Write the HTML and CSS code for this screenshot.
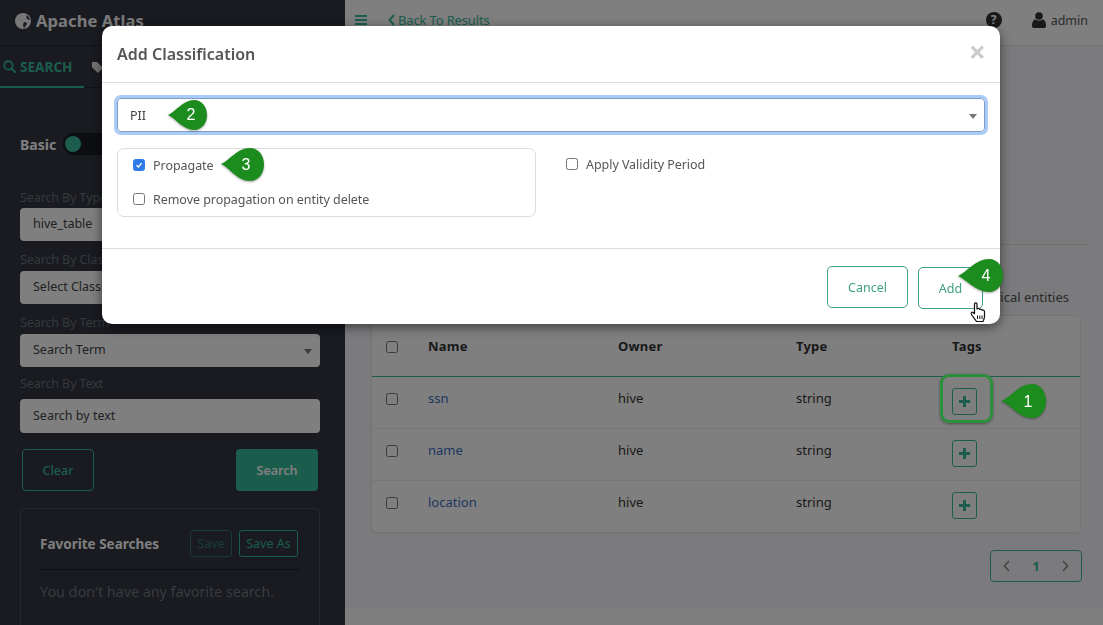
FILE: index.html
```html
<!DOCTYPE html>
<html lang="en">
<head>
<meta charset="utf-8">
<title>Apache Atlas</title>
<link rel="stylesheet" href="styles.css">
</head>
<body>
<div class="app">
  <aside class="sidebar">
    <div class="brand">
      <svg class="globe" viewBox="0 0 16 16"><circle cx="8" cy="8" r="8" fill="#f0f0f0"/><path d="M9 9 11.500 9.500 12 11 10.500 13 9.500 15 8.500 14.500 8 11.500ZM11.500 2 14 4.500 15 7 13 6.500 11.500 5Z" fill="#323641"/></svg>
      <span>Apache Atlas</span>
    </div>
    <nav class="tabs">
      <a class="tab active">
        <svg class="tab-icon" viewBox="0 0 14 14"><circle cx="5.800" cy="5.800" r="4.500" fill="none" stroke="currentColor" stroke-width="2"/><path d="M9 9l4 4" stroke="currentColor" stroke-width="2.200" stroke-linecap="round"/></svg>
        SEARCH
      </a>
      <a class="tab">
        <svg class="tab-icon tag" viewBox="0 0 14 14"><path d="M1 1h5.500L13 7.500 7.500 13 1 6.500Z" fill="currentColor"/></svg>
      </a>
    </nav>
    <div class="search-form">
      <div class="mode">
        <b>Basic</b>
        <span class="toggle"><i></i></span>
      </div>
      <label class="field-label type-label">Search By Type</label>
      <div class="control">hive_table<i class="caret"></i></div>
      <label class="field-label">Search By Classification</label>
      <div class="control">Select Classification<i class="caret"></i></div>
      <label class="field-label">Search By Term</label>
      <div class="control">Search Term<i class="caret"></i></div>
      <label class="field-label text-label">Search By Text</label>
      <div class="control text-control">Search by text</div>
      <div class="actions">
        <button class="btn-clear">Clear</button>
        <button class="btn-search">Search</button>
      </div>
      <section class="favorites">
        <header class="fav-head">
          <b>Favorite Searches</b>
          <span class="fav-btns"><button class="mini dim">Save</button><button class="mini wide">Save As</button></span>
        </header>
        <p>You don't have any favorite search.</p>
      </section>
    </div>
  </aside>

  <main class="content">
    <header class="topbar">
      <svg class="bars" viewBox="0 0 12 10"><path d="M0 0h12v2H0zM0 4h12v2H0zM0 8h12v2H0z" fill="currentColor"/></svg>
      <a class="back">
        <svg viewBox="0 0 7 12"><path d="M6 1 1.500 6 6 11" fill="none" stroke="currentColor" stroke-width="2"/></svg>
        Back To Results
      </a>
      <span class="help">?</span>
      <span class="user">
        <svg viewBox="0 0 14 16"><circle cx="7" cy="4" r="3.800" fill="currentColor"/><path d="M0 14c0-5 2-6.500 3.500-6.500 2 1.500 5 1.500 7 0C12 7.500 14 9 14 14c0 1.500-1 2-2 2H2c-1 0-2-.5-2-2Z" fill="currentColor"/></svg>
        admin
      </span>
    </header>
    <div class="page">
      <div class="rule"></div>
      <label class="historical"><input type="checkbox">Show historical entities</label>
      <div class="card">
        <table>
          <thead>
            <tr><th class="c-check"><input type="checkbox"></th><th class="c-name">Name</th><th class="c-owner">Owner</th><th class="c-type">Type</th><th>Tags</th></tr>
          </thead>
          <tbody>
            <tr><td><input type="checkbox"></td><td><a>ssn</a></td><td>hive</td><td>string</td><td><span class="tag-cell"><button class="plus" aria-label="Add"><svg viewBox="0 0 11 11"><path d="M5.500 0v11M0 5.500h11" stroke="currentColor" stroke-width="3"/></svg></button><span class="highlight"></span></span></td></tr>
            <tr><td><input type="checkbox"></td><td><a>name</a></td><td>hive</td><td>string</td><td><span class="tag-cell"><button class="plus" aria-label="Add"><svg viewBox="0 0 11 11"><path d="M5.500 0v11M0 5.500h11" stroke="currentColor" stroke-width="3"/></svg></button></span></td></tr>
            <tr><td><input type="checkbox"></td><td><a>location</a></td><td>hive</td><td>string</td><td><span class="tag-cell"><button class="plus" aria-label="Add"><svg viewBox="0 0 11 11"><path d="M5.500 0v11M0 5.500h11" stroke="currentColor" stroke-width="3"/></svg></button></span></td></tr>
          </tbody>
        </table>
      </div>
      <div class="pager-row">
        <div class="pager">
          <svg viewBox="0 0 7 12"><path d="M6 1 1.500 6 6 11" fill="none" stroke="currentColor" stroke-width="1.500"/></svg>
          <b>1</b>
          <svg viewBox="0 0 7 12"><path d="M1 1 5.500 6 1 11" fill="none" stroke="currentColor" stroke-width="1.500"/></svg>
        </div>
      </div>
    </div>
    <div class="page-foot"></div>
  </main>
</div>

<div class="backdrop"></div>

<div class="modal">
  <header class="modal-head">
    <h4>Add Classification</h4>
    <span class="close">×</span>
  </header>
  <div class="modal-body">
    <div class="select-focus">PII<i class="caret dark"></i>
      <span class="pin p2"><svg viewBox="0 0 40 32"><path d="M0 16C7 13 15 1 26 1c8 0 13 7 13 15s-5 15-13 15C15 31 7 19 0 16Z"/><text x="23" y="21">2</text></svg></span>
    </div>
    <div class="options">
      <div class="prop-box">
        <label class="opt"><span class="check on"><svg viewBox="0 0 12 12"><path d="M3 6.200 5.200 8.400 9.200 3.800" fill="none" stroke="#fff" stroke-width="1.600"/></svg></span>Propagate
          <span class="pin p3"><svg viewBox="0 0 44 35"><path d="M0 17C8 14 16 1 29 1c9 0 14 8 14 16.500S38 34 29 34C16 34 8 20 0 17Z"/><text x="25" y="23">3</text></svg></span>
        </label>
        <label class="opt"><span class="check"></span>Remove propagation on entity delete</label>
      </div>
      <label class="opt validity"><span class="check"></span>Apply Validity Period</label>
    </div>
  </div>
  <footer class="modal-foot">
    <button class="btn-cancel">Cancel</button>
    <button class="btn-add">Add</button>
  </footer>
  <span class="pin p4"><svg viewBox="0 0 46 35"><path d="M0 18C9 14 18 1 31 1c9 0 14 8 14 16.500S40 34 31 34C18 34 9 22 0 18Z"/><text x="28" y="23">4</text></svg></span>
  <svg class="hand" viewBox="0 0 16 21"><path d="M4.500 2c0-1.500 2.500-1.500 2.500 0v5c1-1 2.500-.5 2.700.5 1-.7 2.300-.2 2.500.8 1-.5 2.300 0 2.300 1.500v4.500c0 2.500-1 3.500-1.500 5.200H6.500C5.500 17.500 3 15 1.500 12.500.5 11 1.800 9.500 3.200 10.500l1.300 1.200Z" fill="#fff" stroke="#111" stroke-width="1.200" stroke-linejoin="round"/><path d="M7.500 13.500v3.500M9.800 13.500v3.500M12 13.500v3.500" stroke="#111" stroke-width="1"/></svg>
</div>
<span class="pin p1"><svg viewBox="0 0 46 36"><path d="M0 18C9 15 18 1 31 1c9 0 14 8 14 17s-5 17-14 17C18 35 9 21 0 18Z"/><text x="27" y="24">1</text></svg></span>
</body>
</html>
```
FILE: styles.css
```css
* { box-sizing: border-box; }
html, body { margin: 0; height: 100%; overflow: hidden; }
body { font-family: "Noto Sans", sans-serif; font-size: 13px; color: #333; }
button { font-family: inherit; cursor: pointer; background: none; }

.app { display: flex; height: 625px; }

/* sidebar */
.sidebar { width: 345px; flex: none; background: #323641; color: #fff; }
.brand { height: 46px; border-bottom: 1px solid #23262e; display: flex; align-items: center; gap: 5px; padding: 0 15px 4px; font-size: 16.500px; font-weight: 700; color: #f5f5f5; letter-spacing: .1px; }
.globe { width: 16px; height: 16px; }
.tabs { height: 42px; border-bottom: 1px solid #23262e; display: flex; }
.tab { display: flex; align-items: center; gap: 4px; height: 42px; padding-top: 1px; font-size: 13.500px; font-weight: 700; letter-spacing: .05px; }
.tab.active { width: 84px; padding-left: 3px; color: #37bb9b; border-bottom: 2px solid #37bb9b; }
.tab-icon { width: 13px; height: 13px; }
.tab .tag { margin-left: 7px; color: #e8e8e8; }

.search-form { padding: 0 25px 0 20px; }
.mode { display: flex; align-items: center; gap: 7px; margin-top: 43px; height: 26px; font-size: 14px; }
.toggle { width: 60px; height: 22px; border-radius: 11px; background: #1a1c22; display: flex; align-items: center; padding-left: 2px; }
.toggle i { width: 16px; height: 16px; border-radius: 50%; background: #38bb9b; }
.field-label { display: block; height: 21px; line-height: 19px; font-size: 12.500px; color: #6c7079; margin-top: 9px; letter-spacing: -.1px; }
.mode + .type-label { margin-top: 31px; height: 20px; }
.control + .text-label { margin-top: 7px; height: 25px; }
.control { position: relative; height: 33px; line-height: 32px; background: #fff; border-radius: 4px; padding: 0 13px; color: #444; font-size: 12.500px; width: 300px; }
.text-control { height: 34px; line-height: 34px; }
.caret { position: absolute; right: 8px; top: 15px; width: 0; height: 0; border: 4px solid transparent; border-top: 5px solid #777; border-bottom: 0; }
.caret.dark { right: 7px; top: 15px; }
.actions { display: flex; justify-content: space-between; margin: 16px 2px 0; }
.btn-clear, .btn-search { height: 42px; border-radius: 4px; font-size: 12.500px; font-weight: 500; }
.btn-clear { width: 72px; border: 1px solid #37bb9b; color: #37bb9b; }
.btn-search { width: 82px; border: 0; background: #37bb9b; color: #fff; font-weight: 600; }
.favorites { margin-top: 17px; width: 300px; height: 140px; border: 1px solid #4b4e58; border-radius: 4px; padding: 21px 19px; }
.fav-head { display: flex; justify-content: space-between; align-items: center; height: 40px; padding-bottom: 12px; border-bottom: 1px solid #1e2026; font-size: 13.500px; }
.fav-btns { display: flex; gap: 7px; margin-right: 2px; }
.mini { width: 42px; height: 27px; padding: 0; border: 1px solid #37bb9b; border-radius: 3px; color: #37bb9b; font-size: 12.500px; }
.mini.wide { width: 59px; }
.mini.dim { opacity: .5; }
.favorites p { margin: 11px 0 0; font-size: 14.500px; color: #70747c; letter-spacing: -.1px; }

/* main */
.content { flex: 1; background: #f6f7fa; display: flex; flex-direction: column; }
.topbar { height: 46px; background: #fff; border-bottom: 1px solid #e4e4e4; display: flex; align-items: center; padding: 0 15px 5px 10px; flex: none; }
.bars { width: 12px; height: 10px; color: #38bb9b; }
.back { display: flex; align-items: center; gap: 3px; margin-left: 21px; color: #38bb9b; font-size: 13px; letter-spacing: -.15px; }
.back svg { width: 7px; height: 12px; }
.help { margin-left: auto; width: 16px; height: 16px; border-radius: 50%; background: #333; color: #fff; font-weight: 700; font-size: 12px; line-height: 16px; text-align: center; }
.user { display: flex; align-items: center; gap: 5px; margin-left: 30px; color: #555; font-size: 12.500px; }
.user svg { width: 14px; height: 16px; color: #333; }

.page { flex: 1; padding: 0 22px 0 26px; position: relative; display: flex; flex-direction: column; align-items: flex-end; }
.rule { align-self: stretch; margin: 198px -11px 0 -26px; height: 1px; background: #e4e4e4; }
.historical { display: flex; align-items: center; gap: 5px; height: 20px; margin-top: 42px; margin-right: 12px; font-size: 13px; color: #555; }
.historical input { margin: 0; }
.card { margin-top: 8px; width: 710px; background: #fff; border: 1px solid #e8e8e8; border-radius: 5px; height: 218px; box-shadow: 0 1px 2px rgba(0,0,0,.05); }
table { width: 100%; border-collapse: collapse; table-layout: fixed; font-size: 13px; color: #333; }
th { height: 60px; text-align: left; vertical-align: top; padding-top: 21px; font-weight: 700; letter-spacing: .2px; color: #333; border-bottom: 1px solid #38bb9b; }
td { height: 52px; vertical-align: top; padding-top: 12px; border-bottom: 1px solid #eee; }
tbody tr:last-child td { border-bottom: 0; }
input[type=checkbox] { width: 12px; height: 12px; margin: 4px 0 0; appearance: none; background: #fff; border: 1px solid #767676; border-radius: 2.500px; display: block; }
th.c-check, td:first-child { padding-left: 14px; }
.c-check { width: 55px; }
.c-name { width: 190px; }
.c-owner { width: 178px; }
.c-type { width: 156px; }
td a { color: #3a6fc2; }
.tag-cell { position: relative; display: inline-block; }
.plus { display: flex; align-items: center; justify-content: center; width: 25px; height: 27px; margin: -1px 0 0; padding: 0; border: 1px solid #38bb9b; border-radius: 3px; color: #38bb9b; }
.plus svg { width: 11px; height: 11px; }
.highlight { position: absolute; z-index: 1; left: -12px; top: -15px; width: 53px; height: 49px; border: 3px solid #2b8f3c; border-radius: 9px; box-shadow: 0 1px 3px rgba(0,0,0,.4); }
.pager-row { align-self: stretch; display: flex; justify-content: flex-end; margin-top: 17px; margin-right: -1px; }
.pager { width: 92px; height: 32px; border: 1px solid #38bb9b; border-radius: 4px; display: flex; align-items: center; justify-content: space-between; padding: 0 12px; color: #888; }
.pager svg { width: 7px; height: 12px; }
.pager b { color: #38bb9b; font-size: 13px; }
.page-foot { height: 17px; background: #fdfdfd; flex: none; }

/* overlay */
.backdrop { position: fixed; inset: 0; background: rgba(0,0,0,.5); }
.modal { position: fixed; left: 102px; top: 26px; width: 898px; height: 298px; background: #fff; border-radius: 10px; box-shadow: 0 3px 12px rgba(0,0,0,.5); display: flex; flex-direction: column; color: #555; }
.modal-head { height: 57px; border-bottom: 1px solid #ddd; display: flex; align-items: center; justify-content: space-between; padding: 0 14px 0 15px; flex: none; }
.modal-head h4 { margin: 0; font-size: 16px; font-weight: 600; color: #555; }
.close { font-size: 30px; font-weight: 700; color: #ccc; line-height: 1; margin: -4px 0 0; }
.modal-body { flex: 1; padding: 15px 15px 0; }
.select-focus { position: relative; height: 34px; width: 868px; line-height: 33px; padding-left: 12px; border: 1px solid #7e9dc6; border-radius: 4px; box-shadow: 0 0 0 3px #a8cbf7; font-size: 12.500px; color: #444; }
.options { display: flex; gap: 30px; margin-top: 16px; }
.prop-box { width: 419px; height: 69px; border: 1px solid #ddd; border-radius: 7px; padding: 6px 15px 0; display: flex; flex-direction: column; gap: 14px; }
.opt { position: relative; display: flex; align-items: center; gap: 8px; height: 20px; font-size: 12.500px; letter-spacing: -.05px; color: #555; }
.validity { margin-top: 6px; }
.check { width: 12px; height: 12px; border: 1px solid #767676; border-radius: 2.500px; background: #fff; flex: none; }
.check.on { background: #2e7ce6; border-color: #2e7ce6; display: flex; }
.check.on svg { width: 10px; height: 10px; }
.modal-foot { height: 76px; border-top: 1px solid #ddd; display: flex; gap: 10px; justify-content: flex-end; padding: 17px 17px 0 0; flex: none; }
.btn-cancel, .btn-add { height: 42px; border: 1px solid #3f9f87; border-radius: 5px; background: #fff; color: #3f9f87; font-size: 12.500px; }
.btn-cancel { width: 81px; }
.btn-add { width: 65px; margin-top: 1px; }

.pin { position: absolute; display: block; }
.pin svg { display: block; width: 100%; height: 100%; filter: drop-shadow(0 1px 1px rgba(0,0,0,.35)); }
.pin path { fill: #1c8c1e; }
.pin text { fill: #fff; font-family: "Liberation Sans", sans-serif; font-size: 16px; font-weight: 400; text-anchor: middle; }
.p1 { left: 1001px; top: 383px; width: 46px; height: 36px; position: fixed; }
.p2 { left: 50px; top: 0; width: 40px; height: 32px; }
.p3 { left: 88px; top: -8px; width: 44px; height: 35px; }
.p4 { left: 856px; top: 232px; width: 46px; height: 35px; }
.hand { position: absolute; left: 868px; top: 276px; width: 16px; height: 21px; }
```
